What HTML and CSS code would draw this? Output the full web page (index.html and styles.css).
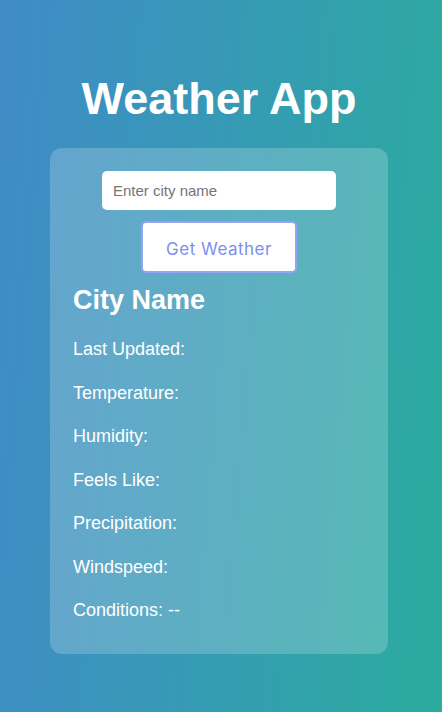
FILE: index.html
```html
<!DOCTYPE html>
<html lang="en">
<head>
<meta charset="UTF-8">
<title>Weather App</title>
<link rel="stylesheet" href="styles.css">
</head>
<body>
  <main class="app">
    <h1 class="title">Weather App</h1>
    <section class="card">
      <div class="search">
        <input class="city-input" type="text" placeholder="Enter city name">
        <button class="btn" type="button">Get Weather</button>
      </div>
      <h2 class="city">City Name</h2>
      <p class="row">Last Updated:</p>
      <p class="row">Temperature:</p>
      <p class="row">Humidity:</p>
      <p class="row">Feels Like:</p>
      <p class="row">Precipitation:</p>
      <p class="row">Windspeed:</p>
      <p class="row">Conditions: --</p>
    </section>
  </main>
</body>
</html>
```
FILE: styles.css
```css
* { box-sizing: border-box; }
html, body { margin: 0; padding: 0; height: 100%; }
body {
  font-family: "Liberation Sans", Arial, sans-serif;
  color: #fff;
  background: linear-gradient(95deg, #408bc7 0%, #3799b6 45%, #2bac9e 100%);
  min-height: 712px;
}
.app {
  display: flex;
  flex-direction: column;
  align-items: center;
  padding: 72px 4px 0 0;
}
.title {
  margin: 0 0 22px;
  font-size: 45px;
  font-weight: bold;
  line-height: 54px;
}
.card {
  width: 338px;
  background: rgba(255, 255, 255, 0.2);
  border-radius: 12px;
  padding: 23px 23px 34px;
}
.search {
  display: flex;
  flex-direction: column;
  align-items: center;
  gap: 11px;
}
.city-input {
  width: 234px;
  height: 39px;
  border: none;
  border-radius: 5px;
  padding: 0 11px;
  font-family: "Liberation Sans", Arial, sans-serif;
  font-size: 15px;
  color: #333;
  background: #fff;
  outline: none;
}
.city-input::placeholder { color: #757575; }
.btn {
  width: 156px;
  height: 52px;
  padding: 3px 0 0;
  background: #fff;
  border: 2px solid #95a3f7;
  border-radius: 5px;
  color: #7d8ef2;
  font-family: Inter, "Open Sans", sans-serif;
  font-size: 17px;
  letter-spacing: 0.5px;
  cursor: pointer;
}
.city {
  margin: 12px 0 24px;
  font-size: 27px;
  font-weight: bold;
  line-height: 30px;
}
.row {
  margin: 0 0 23.5px;
  font-size: 18px;
  line-height: 20px;
}
.row:last-child { margin-bottom: 0; }
```
